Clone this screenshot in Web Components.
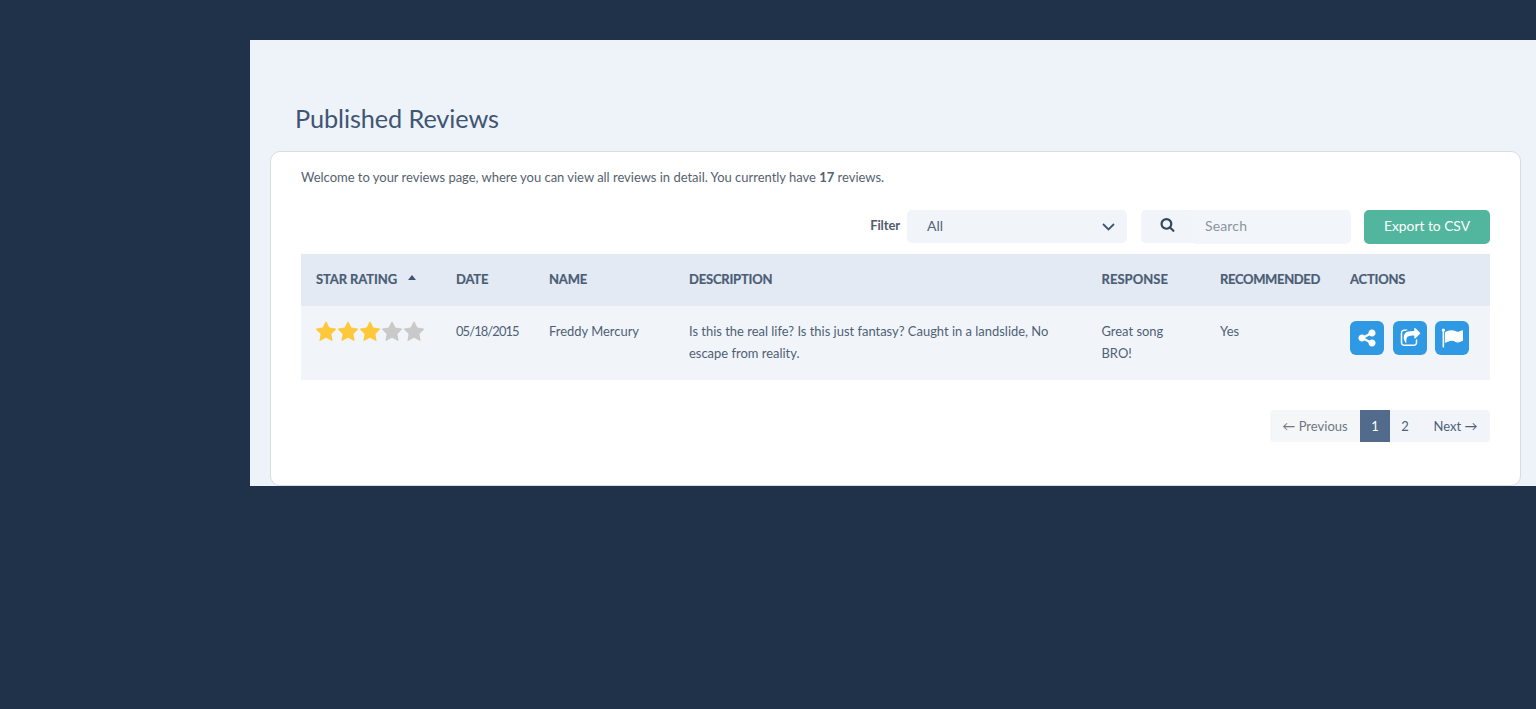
<!DOCTYPE html>
<html>
<head>
<meta charset="utf-8">
<title>Published Reviews</title>
<style>
    html, body { margin: 0; height: 100%; }
    body {
        background: #20324a;
        font-family: Lato, "Liberation Sans", sans-serif;
        color: #4c5d75;
        overflow: hidden;
    }
    b { font-weight: 700; }
</style>
</head>
<body>
<reviews-page>
    <span slot="title">Published Reviews</span>
    <reviews-card>
        <span slot="intro">Welcome to your reviews page, where you can view all reviews in detail. You currently have <b>17</b> reviews.</span>
        <reviews-toolbar slot="toolbar"></reviews-toolbar>
        <reviews-table slot="table"></reviews-table>
        <reviews-pager slot="pager"></reviews-pager>
    </reviews-card>
</reviews-page>

<script>
const ICONS = {
    star: {box: '0 0 1792 1792', d: 'M1728 647q0 22-26 48l-363 354 86 500q1 7 1 20 0 21-10.5 35.5t-30.5 14.5q-19 0-40-12l-449-236-449 236q-22 12-40 12-21 0-31.5-14.5t-10.5-35.5q0-6 2-20l86-500-364-354q-25-27-25-48 0-37 56-46l502-73 225-455q19-41 49-41t49 41l225 455 502 73q56 9 56 46z'},
    share: {box: '0 0 1536 1792', d: 'M1216 1024q133 0 226.5 93.5t93.5 226.5-93.5 226.5-226.5 93.5-226.5-93.5-93.5-226.5q0-12 2-34l-360-180q-92 86-218 86-133 0-226.5-93.5t-93.5-226.5 93.5-226.5 226.5-93.5q126 0 218 86l360-180q-2-22-2-34 0-133 93.5-226.5t226.5-93.5 226.5 93.5 93.5 226.5-93.5 226.5-226.5 93.5q-126 0-218-86l-360 180q2 22 2 34t-2 34l360 180q92-86 218-86z'},
    forward: {box: '0 0 1792 1792', d: 'M1472 989v259q0 119-84.5 203.5t-203.5 84.5h-832q-119 0-203.5-84.5t-84.5-203.5v-832q0-119 84.5-203.5t203.5-84.5h255q13 0 22.5 9.5t9.5 22.5q0 27-26 32-77 26-133 60-10 4-16 4h-112q-66 0-113 47t-47 113v832q0 66 47 113t113 47h832q66 0 113-47t47-113v-214q0-19 18-29 28-13 54-37 16-16 35-8 21 9 21 29zm237-496l-384 384q-18 19-45 19-12 0-25-5-39-17-39-59v-192h-160q-323 0-438 131-119 137-74 473 3 23-20 34-8 2-12 2-16 0-26-13-10-14-21-31t-39.5-68.5-49.5-99.5-38.5-114-17.5-122q0-49 3.5-91t14-90 28-88 47-81.5 68.5-74 94.5-61.5 124.5-48.5 159.5-30.5 196.5-11h160v-192q0-42 39-59 13-5 25-5 26 0 45 19l384 384q19 19 19 45t-19 45z'},
    flag: {box: '0 0 1792 1792', d: 'M320 256q0 72-64 110v1266q0 13-9.5 22.5t-22.5 9.5h-64q-13 0-22.5-9.5t-9.5-22.5v-1266q-64-38-64-110 0-53 37.5-90.5t90.5-37.5 90.5 37.5 37.5 90.5zm1472 64v763q0 25-12.5 38.5t-39.5 27.5q-215 116-369 116-61 0-123.5-22t-108.5-48-115.5-48-142.5-22q-192 0-464 146-17 9-33 9-26 0-45-19t-19-45v-742q0-32 31-55 21-14 79-43 236-120 421-120 107 0 200 29t219 88q38 19 88 19 54 0 117.5-21t110-47 88-47 54.5-21q26 0 45 19t19 45z'},
    search: {box: '0 0 1664 1792', d: 'M1152 704q0-185-131.5-316.5t-316.5-131.5-316.5 131.5-131.5 316.5 131.5 316.5 316.5 131.5 316.5-131.5 131.5-316.5zm512 832q0 52-38 90t-90 38q-54 0-90-38l-343-342q-179 124-399 124-143 0-273.5-55.5t-225-150-150-225-55.5-273.5 55.5-273.5 150-225 225-150 273.5-55.5 273.5 55.5 225 150 150 225 55.5 273.5q0 220-124 399l343 343q37 37 37 90z'}
};

function icon(name, size, color){
    const i = ICONS[name];
    return `<svg width="${size}" height="${size}" viewBox="${i.box}" fill="${color}"><path d="${i.d}"/></svg>`;
}

class ReviewsPage extends HTMLElement {
    constructor(){
        super();
        this.attachShadow({mode: 'open'});
    }

    connectedCallback(){
        this.shadowRoot.innerHTML = `
            <style>
                :host {
                    display: block;
                    margin: 40px 0 0 250px;
                    height: 446px;
                    background: #eef2f9;
                    overflow: hidden;
                }
                h1 {
                    margin: 0;
                    padding: 61px 0 16px 45px;
                    height: 34px;
                    line-height: 34px;
                    font-size: 25.3px;
                    font-weight: 400;
                    letter-spacing: -0.1px;
                    color: #3f5673;
                }
                .body { margin: 0 15px 0 20px; }
            </style>
            <h1><slot name="title"></slot></h1>
            <div class="body"><slot></slot></div>
        `;
    }
}

class ReviewsCard extends HTMLElement {
    constructor(){
        super();
        this.attachShadow({mode: 'open'});
    }

    connectedCallback(){
        this.shadowRoot.innerHTML = `
            <style>
                :host {
                    display: block;
                    box-sizing: border-box;
                    height: 335px;
                    padding: 16px 30px 0;
                    background: #fff;
                    border: 1px solid #d9dcdf;
                    border-radius: 10px;
                }
                .intro {
                    height: 18px;
                    line-height: 18px;
                    font-size: 13px;
                    letter-spacing: -0.02px;
                    color: #56626f;
                    margin-bottom: 24px;
                }
                .pager { margin-top: 30px; }
            </style>
            <div class="intro"><slot name="intro"></slot></div>
            <slot name="toolbar"></slot>
            <slot name="table"></slot>
            <div class="pager"><slot name="pager"></slot></div>
        `;
    }
}

class ReviewsToolbar extends HTMLElement {
    constructor(){
        super();
        this.attachShadow({mode: 'open'});
    }

    connectedCallback(){
        this.shadowRoot.innerHTML = `
            <style>
                :host {
                    display: flex;
                    justify-content: flex-end;
                    align-items: flex-start;
                    height: 44px;
                    font-size: 14px;
                }
                .label {
                    font-weight: 700;
                    font-size: 13px;
                    line-height: 30px;
                    letter-spacing: -0.1px;
                    color: #4f5d6e;
                    margin-right: 7px;
                }
                .select {
                    box-sizing: border-box;
                    width: 220px;
                    height: 33px;
                    padding: 0 12px 2px 20px;
                    display: flex;
                    align-items: center;
                    justify-content: space-between;
                    background: #f1f5fa;
                    border-radius: 5px;
                    color: #55657a;
                    margin-right: 14px;
                }
                .select svg { margin-top: 2px; }
                .search {
                    display: flex;
                    width: 210px;
                    height: 34px;
                    margin-right: 13px;
                }
                .addon {
                    flex: none;
                    width: 56px;
                    height: 33px;
                    padding: 0 0 2px 19px;
                    box-sizing: border-box;
                    display: flex;
                    align-items: center;
                    background: #f1f5fa;
                    border-radius: 5px 0 0 5px;
                }
                .placeholder {
                    flex: 1;
                    margin-left: -6px;
                    padding-left: 14px;
                    line-height: 32px;
                    letter-spacing: 0.15px;
                    color: #8d949c;
                    background: #f2f6fb;
                    border-radius: 5px;
                }
                .export {
                    box-sizing: border-box;
                    width: 126px;
                    height: 34px;
                    line-height: 32px;
                    font-size: 13.8px;
                    text-align: center;
                    background: #52b69e;
                    color: #fff;
                    border-radius: 5px;
                }
            </style>
            <span class="label">Filter</span>
            <div class="select">
                <span>All</span>
                <svg width="13" height="8" viewBox="0 0 13 8" fill="none" stroke="#3f5673" stroke-width="1.8"><path d="M1 1l5.5 5.5L12 1"/></svg>
            </div>
            <div class="search">
                <span class="addon">${icon('search', 15, '#33475f')}</span>
                <span class="placeholder">Search</span>
            </div>
            <div class="export">Export to CSV</div>
        `;
    }
}

class StarRating extends HTMLElement {
    constructor(){
        super();
        this.attachShadow({mode: 'open'});
    }

    connectedCallback(){
        const value = Number(this.getAttribute('value'));
        let stars = '';
        for(let i = 1; i <= 5; i++){
            stars += icon('star', 22, i <= value ? '#fdc93b' : '#c9c9c9');
        }
        this.shadowRoot.innerHTML = `
            <style>
                :host { display: flex; height: 22px; margin-left: -1px; }
                svg { display: block; flex: none; }
            </style>
            ${stars}
        `;
    }
}

class ActionButton extends HTMLElement {
    constructor(){
        super();
        this.attachShadow({mode: 'open'});
    }

    connectedCallback(){
        this.shadowRoot.innerHTML = `
            <style>
                :host {
                    display: flex;
                    align-items: center;
                    justify-content: center;
                    width: 34px;
                    height: 34px;
                    background: #2f9ae3;
                    border-radius: 6px;
                }
                svg { display: block; }
            </style>
            ${icon(this.getAttribute('icon'), this.getAttribute('size') || 20, '#fff')}
        `;
    }
}

class ReviewsTable extends HTMLElement {
    constructor(){
        super();
        this.attachShadow({mode: 'open'});
    }

    connectedCallback(){
        this.shadowRoot.innerHTML = `
            <style>
                :host {
                    display: grid;
                    grid-template-columns: 140px 93px 140px 412.5px 118.5px 130px 155px;
                    font-size: 14px;
                }
                .th {
                    height: 52px;
                    padding: 0 0 2px 15px;
                    box-sizing: border-box;
                    display: flex;
                    align-items: center;
                    background: #e3eaf4;
                    font-size: 13px;
                    font-weight: 700;
                    letter-spacing: -0.2px;
                    -webkit-text-stroke: 0.2px;
                    color: #4b5d75;
                    text-transform: uppercase;
                    white-space: nowrap;
                }
                .th.rating { letter-spacing: -0.1px; }
                .th.response { letter-spacing: 0.05px; }
                .th.recommended { letter-spacing: -0.35px; }
                .caret {
                    width: 0;
                    height: 0;
                    margin: 0 0 3px 11px;
                    border: 4.5px solid transparent;
                    border-top: 0;
                    border-bottom: 5px solid #3f5673;
                }
                .td {
                    height: 74px;
                    box-sizing: border-box;
                    padding: 14px 15px 0;
                    background: #f1f5fa;
                    line-height: 22px;
                    font-size: 12.95px;
                    color: #4f5f76;
                }
                .date { letter-spacing: -0.9px; }
                .stars { padding-top: 15px; }
                .actions { display: flex; padding: 15px 0 0 15px; }
                action-button + action-button { margin-left: 9px; }
                action-button + action-button + action-button { margin-left: 8px; }
            </style>
            <div class="th rating">Star Rating<span class="caret"></span></div>
            <div class="th">Date</div>
            <div class="th">Name</div>
            <div class="th">Description</div>
            <div class="th response">Response</div>
            <div class="th recommended">Recommended</div>
            <div class="th">Actions</div>

            <div class="td stars"><star-rating value="3"></star-rating></div>
            <div class="td date">05/18/2015</div>
            <div class="td">Freddy Mercury</div>
            <div class="td">Is this the real life? Is this just fantasy? Caught in a landslide, No escape from reality.</div>
            <div class="td">Great song BRO!</div>
            <div class="td">Yes</div>
            <div class="td actions">
                <action-button icon="share" size="20"></action-button>
                <action-button icon="forward" size="21"></action-button>
                <action-button icon="flag" size="22"></action-button>
            </div>
        `;
    }
}

class ReviewsPager extends HTMLElement {
    constructor(){
        super();
        this.attachShadow({mode: 'open'});
    }

    connectedCallback(){
        this.shadowRoot.innerHTML = `
            <style>
                :host {
                    display: flex;
                    justify-content: flex-end;
                    font-size: 13px;
                    color: #4f5f76;
                }
                span {
                    height: 32px;
                    line-height: 32px;
                    text-align: center;
                    background: #f1f5fa;
                    box-sizing: border-box;
                }
                .prev { width: 90px; background: #f5f6f8; color: #6d7682; border-radius: 4px 0 0 4px; }
                .num { width: 30px; }
                .active { background: #526b8c; color: #fff; }
                .next { width: 70px; padding-left: 1px; border-radius: 0 4px 4px 0; }
            </style>
            <span class="prev">&larr; Previous</span>
            <span class="num active">1</span>
            <span class="num">2</span>
            <span class="next">Next &rarr;</span>
        `;
    }
}

customElements.define('reviews-page', ReviewsPage);
customElements.define('reviews-card', ReviewsCard);
customElements.define('reviews-toolbar', ReviewsToolbar);
customElements.define('star-rating', StarRating);
customElements.define('action-button', ActionButton);
customElements.define('reviews-table', ReviewsTable);
customElements.define('reviews-pager', ReviewsPager);
</script>
</body>
</html>
